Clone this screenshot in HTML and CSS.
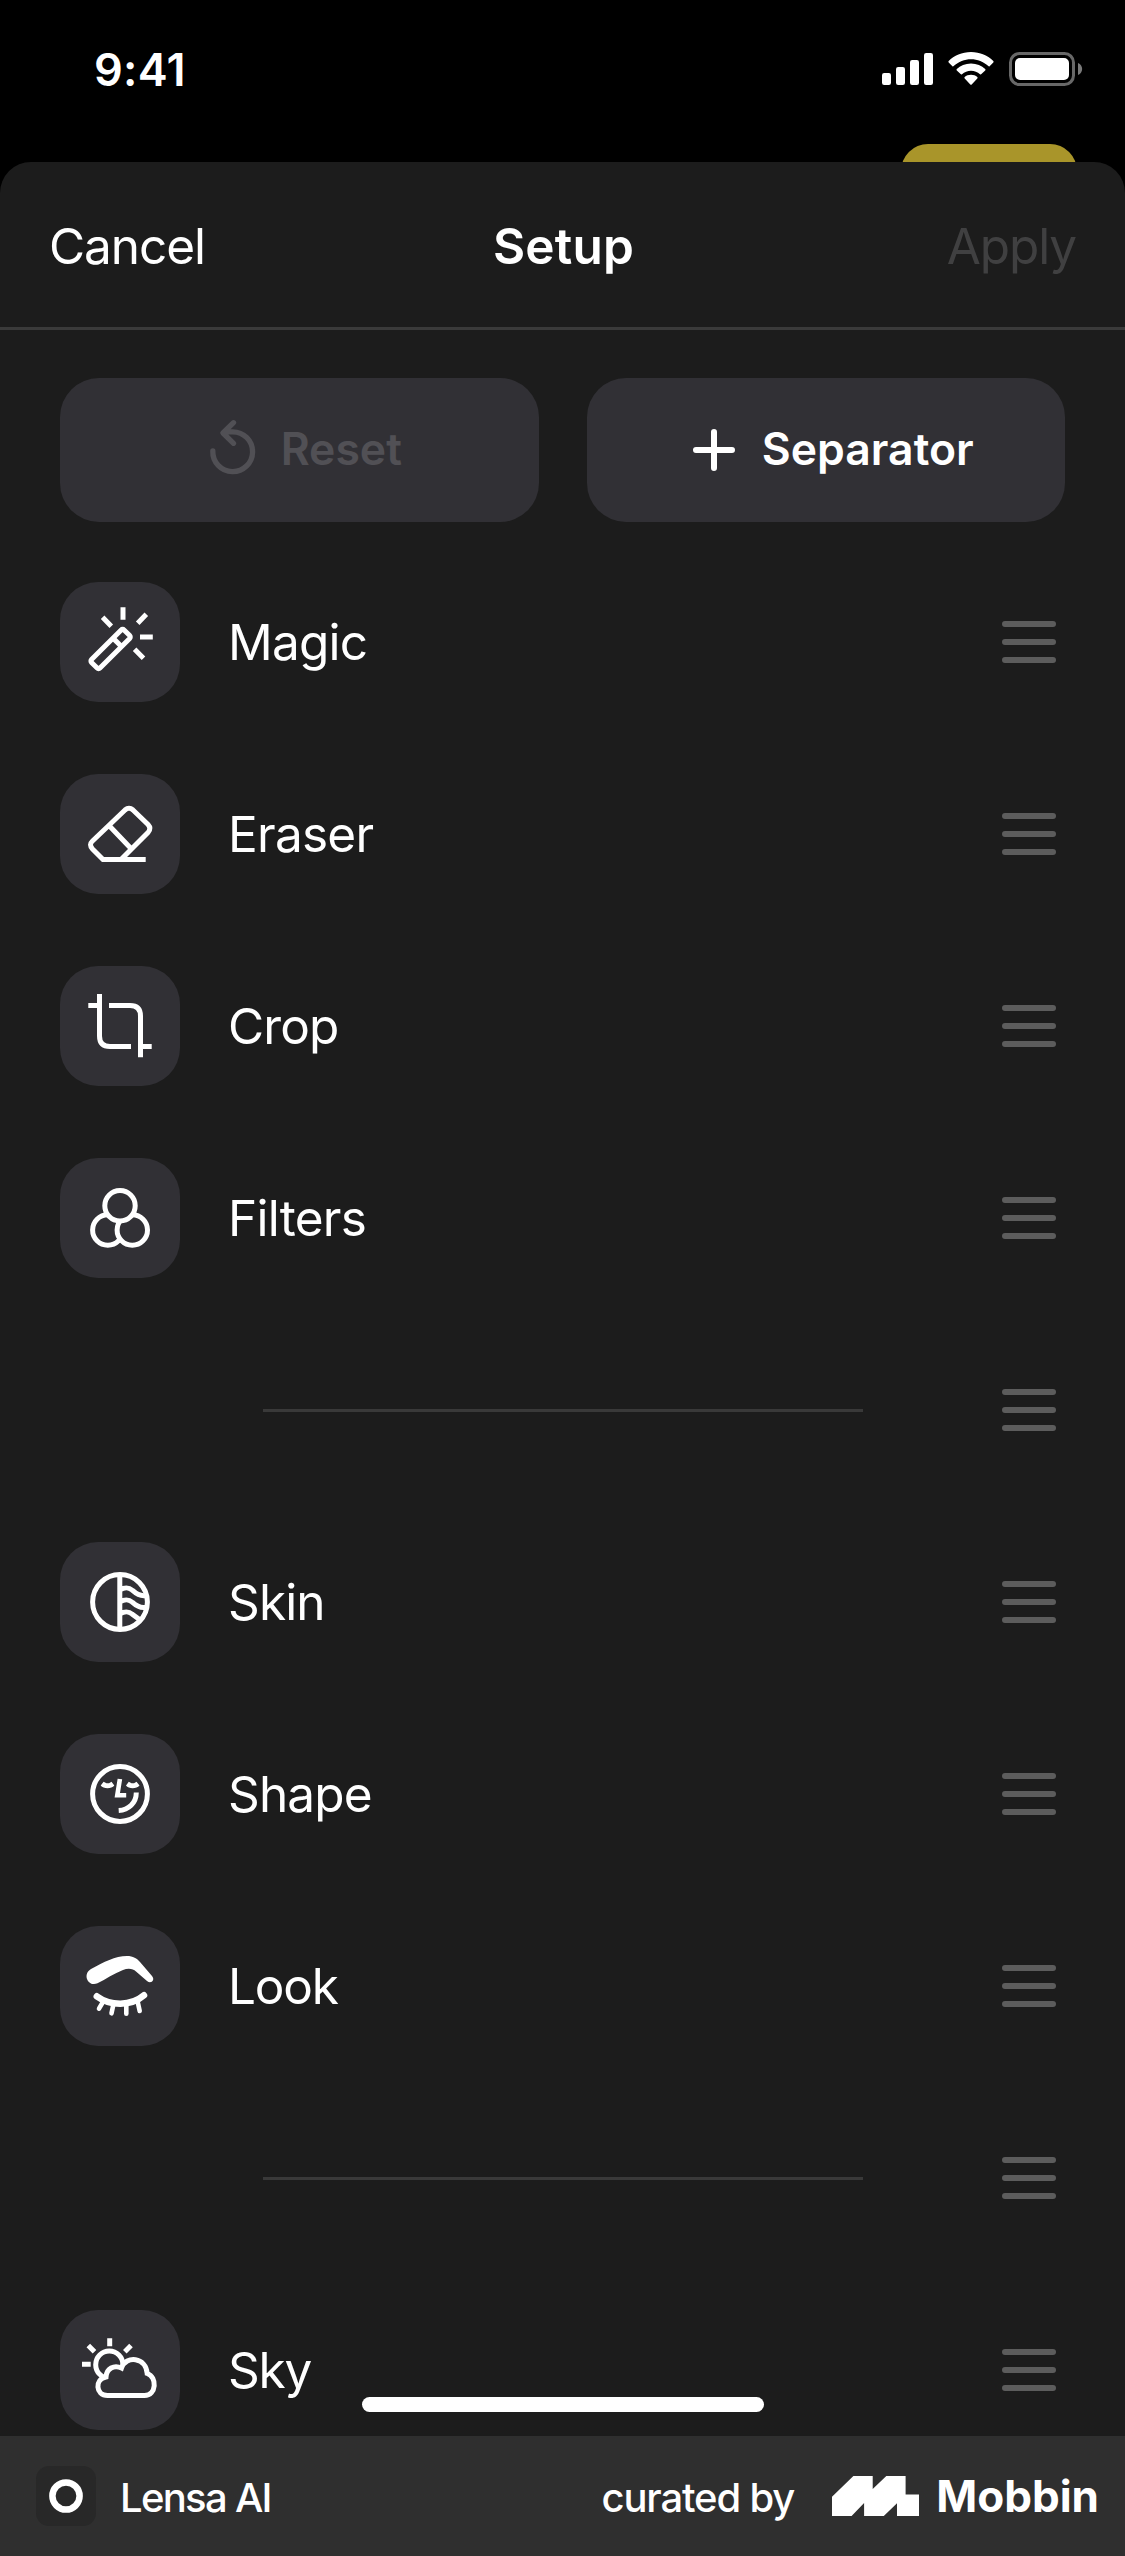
FILE: index.html
```
<!DOCTYPE html>
<html lang="en">
<head>
<meta charset="utf-8">
<title>Setup</title>
<link rel="stylesheet" href="styles.css">
</head>
<body>
<svg class="defs" aria-hidden="true">
  <symbol id="handle" viewBox="0 0 54 42">
    <path d="M3 3H51M3 21H51M3 39H51" stroke="#5c5c5c" stroke-width="6" stroke-linecap="round"/>
  </symbol>
</svg>

<main class="screen">
  <div class="status">
    <span class="time">9:41</span>
    <div class="status-icons">
      <svg width="51" height="32" viewBox="0 0 51 32" fill="#fff">
        <rect x="0" y="20" width="9" height="12" rx="2.2"/>
        <rect x="14" y="14" width="9" height="18" rx="2.2"/>
        <rect x="28" y="7" width="9" height="25" rx="2.2"/>
        <rect x="42" y="0" width="9" height="32" rx="2.2"/>
      </svg>
      <svg width="46" height="34" viewBox="0 0 46 34" fill="#fff">
        <path d="M23 0C32 0 40 3.5 45.300 9.100Q46 9.900 45.300 10.600L41.600 14.200Q41 14.800 40.300 14.100C35.500 9.700 29.500 7.300 23 7.300S10.500 9.700 5.700 14.100Q5 14.800 4.400 14.200L.7 10.600Q0 9.900.7 9.100C6 3.500 14 0 23 0Z"/>
        <path d="M23 11.400C28.700 11.400 33.700 13.500 37.200 17Q37.900 17.700 37.200 18.400L33.400 22.100Q32.700 22.800 32 22.200C29.500 20 26.500 18.700 23 18.700S16.500 20 14 22.200Q13.300 22.800 12.600 22.100L8.800 18.400Q8.100 17.700 8.800 17C12.300 13.500 17.300 11.400 23 11.400Z"/>
        <path d="M23 22.800C25.500 22.800 27.700 23.600 29.300 25Q30 25.700 29.300 26.400L23.700 32.400Q23 33.100 22.300 32.400L16.700 26.400Q16 25.700 16.700 25C18.300 23.600 20.500 22.800 23 22.800Z"/>
      </svg>
      <svg width="74" height="34" viewBox="0 0 74 34">
        <rect x="1.500" y="1.500" width="63" height="31" rx="9" fill="none" stroke="#686868" stroke-width="3"/>
        <rect x="6" y="6" width="54" height="22" rx="5" fill="#fff"/>
        <path d="M69 11C74.500 13 74.500 21 69 23Z" fill="#7a7a7a"/>
      </svg>
    </div>
    <div class="peek"></div>
  </div>

  <section class="sheet">
    <header class="bar">
      <span class="cancel">Cancel</span>
      <h1 class="title">Setup</h1>
      <span class="apply">Apply</span>
    </header>

    <div class="actions">
      <div class="button disabled">
        <svg width="72" height="72" viewBox="0 0 72 72" fill="none" stroke="currentColor" stroke-width="5.300" stroke-linecap="round" stroke-linejoin="round">
          <path d="M15.800 37A19.900 19.900 0 1 0 35.700 17.800H28M36.500 8.700L26 19L36.500 29.300"/>
        </svg>
        <span>Reset</span>
      </div>
      <div class="button">
        <svg width="72" height="72" viewBox="0 0 72 72" fill="none" stroke="currentColor" stroke-width="6" stroke-linecap="round">
          <path d="M36 18V54M18 36H54"/>
        </svg>
        <span>Separator</span>
      </div>
    </div>

    <ul class="tools">
      <li class="row">
        <svg class="tile" viewBox="0 0 120 120">
          <g transform="translate(50.600 67) rotate(-45)"><rect x="-23" y="-6" width="46" height="12" rx="2"/><path d="M9.400 -6V6"/></g>
          <path d="M63 25.300V37.700M86.300 32.300L77.700 41.200M80 55H92.800M74.600 67.300L83.500 76.300M42.600 35.300L51.300 44.200"/>
        </svg>
        <span class="label loose">Magic</span>
        <svg class="handle"><use href="#handle"/></svg>
      </li>
      <li class="row">
        <svg class="tile" viewBox="0 0 120 120">
          <path d="M85.700 85.500H43L32.500 75Q28.500 70.700 32.500 67L65 36Q69 32.500 73 36L88 50.500Q91.700 54.500 88 58.500L61 85.500M49 51.500L71 74.500"/>
        </svg>
        <span class="label loose">Eraser</span>
        <svg class="handle"><use href="#handle"/></svg>
      </li>
      <li class="row">
        <svg class="tile" viewBox="0 0 120 120">
          <path d="M28.300 39.500H39.500M39.500 28V70Q39.500 80.500 50 80.500H71M49 39.500H70Q80.500 39.500 80.500 50V91.300M80.500 80.500H91.700"/>
        </svg>
        <span class="label">Crop</span>
        <svg class="handle"><use href="#handle"/></svg>
      </li>
      <li class="row">
        <svg class="tile" viewBox="0 0 120 120">
          <g class="filled"><circle cx="47.800" cy="72" r="15.200"/><circle cx="72.300" cy="72" r="15.200"/><circle cx="60" cy="47.700" r="15.200"/></g>
        </svg>
        <span class="label loose">Filters</span>
        <svg class="handle"><use href="#handle"/></svg>
      </li>
      <li class="row divider">
        <hr>
        <svg class="handle"><use href="#handle"/></svg>
      </li>
      <li class="row">
        <svg class="tile" viewBox="0 0 120 120">
          <circle cx="60" cy="60" r="27.400"/>
          <path d="M59.800 33V87M60 48C64 45.300 69 45.300 72 48S79 54.800 86 53.500M60 60C64 57.300 69 57.300 72 60S79 66.800 86 65.300M60 72C64 69.300 69 69.300 72 72L79.500 77.500"/>
        </svg>
        <span class="label">Skin</span>
        <svg class="handle"><use href="#handle"/></svg>
      </li>
      <li class="row">
        <svg class="tile" viewBox="0 0 120 120">
          <circle cx="60" cy="60" r="27.400"/>
          <path d="M59.900 45L57.300 61.300H66.200" stroke-width="4.600"/>
          <path d="M76.300 58.500C76.300 69 68.500 76 58.700 76.600"/>
          <path class="solid" d="M40.700 51.500L43.600 47.800L46.500 49.200H49L51.500 47.800L54.300 51.500C51.500 55.200 43.500 55.200 40.700 51.500ZM66 51.500L68.800 47.800L71.500 49.200H74L76.500 47.800L79.500 51.500C76.500 55.200 68.800 55.200 66 51.500Z"/>
        </svg>
        <span class="label">Shape</span>
        <svg class="handle"><use href="#handle"/></svg>
      </li>
      <li class="row">
        <svg class="tile" viewBox="0 0 120 120">
          <path class="solid" d="M31 43C44 36 55 30 67 30C73 30 77 32.500 80 36L92 50C95.500 54 91 58.500 87 55L76 45.500C73 42.500 68 42 63 44C54 47.500 46 53 37.500 57.300C28 61.500 22 48 31 43Z"/>
          <path class="round" stroke-width="6.500" d="M36.800 70.300C50 80 71 80.500 84 69.300"/>
          <path class="round" stroke-width="4.600" d="M43.500 75L39 82.700M53.500 78L51.500 87.300M66.300 78V87.800M77.500 75L79.700 85"/>
        </svg>
        <span class="label tight">Look</span>
        <svg class="handle"><use href="#handle"/></svg>
      </li>
      <li class="row divider">
        <hr>
        <svg class="handle"><use href="#handle"/></svg>
      </li>
      <li class="row">
        <svg class="tile" viewBox="0 0 120 120">
          <circle cx="49.300" cy="54.700" r="13.600"/>
          <path d="M49.700 28.300V36.300M22 54.300H30.700M28.300 35.500L34.500 41.800M71 35.500L64.800 41.800"/>
          <path class="filled" d="M47.500 85.500C35.500 85.500 34.500 69 46 67C46.500 58.500 54 54.500 61.500 58C66 45 86 47 87.200 63.500C97.500 67 96.500 85.500 84.500 85.500Z"/>
        </svg>
        <span class="label tight">Sky</span>
        <svg class="handle"><use href="#handle"/></svg>
      </li>
    </ul>
  </section>
  <div class="home-indicator"></div>
</main>

<footer class="credit">
  <svg class="app-icon" width="60" height="60" viewBox="0 0 60 60">
    <rect width="60" height="60" rx="13" fill="#282828"/>
    <circle cx="30" cy="30" r="13.600" fill="none" stroke="#fff" stroke-width="6.500"/>
  </svg>
  <span class="app-name">Lensa AI</span>
  <span class="curated">curated by</span>
  <svg width="87" height="40" viewBox="0 0 87 40" fill="#fff">
    <path d="M0 20.700L21.400 0H40.700V13L54.300 0H73.600V18.500H87V40H65V27.300L51.800 40H32.100V27L19.600 40H0Z"/>
  </svg>
  <span class="brand">Mobbin</span>
</footer>
</body>
</html>
```
FILE: styles.css
```
* {
  box-sizing: border-box;
}

body {
  margin: 0;
  width: 1125px;
  background: #000;
  color: #fff;
  font-family: Inter, "Liberation Sans", sans-serif;
}

svg {
  display: block;
  flex: none;
}

.defs {
  position: absolute;
  width: 0;
  height: 0;
}

.screen {
  position: relative;
  height: 2436px;
  overflow: hidden;
}

/* status bar */
.status {
  position: relative;
  display: flex;
  align-items: center;
  justify-content: space-between;
  height: 162px;
  padding: 0 42px 24px 94px;
}

.time {
  font-size: 45px;
  font-weight: 600;
  letter-spacing: 0.3px;
}

.status-icons {
  display: flex;
  align-items: center;
  gap: 15px;
}

/* button of the screen underneath, showing above the sheet */
.peek {
  position: absolute;
  right: 48px;
  bottom: -42px;
  width: 176px;
  height: 60px;
  border-radius: 27px;
  background: #a9952a;
}

/* sheet */
.sheet {
  position: relative;
  min-height: 2274px;
  border-radius: 31px 31px 0 0;
  background: #1c1c1c;
}

.bar {
  display: grid;
  grid-template-columns: 1fr auto 1fr;
  align-items: center;
  height: 168px;
  padding: 3px 49px 0 49px;
  border-bottom: 3px solid #3a3a3a;
  font-size: 49.5px;
}

.cancel {
  letter-spacing: -1.05px;
}

.title {
  margin: 0;
  padding-left: 2px;
  font-size: inherit;
  font-weight: 600;
  letter-spacing: 0.2px;
}

.apply {
  justify-self: end;
  color: #404041;
  letter-spacing: -1.1px;
}

.actions {
  display: grid;
  grid-template-columns: 1fr 1fr;
  gap: 48px;
  padding: 48px 60px 24px;
}

.button {
  display: flex;
  align-items: center;
  justify-content: center;
  gap: 12px;
  height: 144px;
  border-radius: 39px;
  background: #313035;
  font-size: 44.5px;
  font-weight: 600;
}

.button span {
  padding-bottom: 2px;
}

.disabled {
  color: #515055;
}

/* tool list */
.tools {
  margin: 0;
  padding: 0;
  list-style: none;
}

.row {
  display: flex;
  align-items: center;
  height: 192px;
  padding: 0 69px 0 60px;
}

.tile {
  width: 120px;
  height: 120px;
  border-radius: 38px;
  background: #313035;
  fill: none;
  stroke: #fff;
  stroke-width: 5;
}

.tile .filled {
  fill: #313035;
}

.tile .solid {
  fill: #fff;
  stroke: none;
}

.tile .round {
  stroke-linecap: round;
}

.label {
  flex: 1;
  margin-left: 48px;
  font-size: 49.5px;
  letter-spacing: -0.85px;
}

.loose {
  letter-spacing: -0.75px;
}

.tight {
  letter-spacing: -1.2px;
}

.handle {
  width: 54px;
  height: 42px;
}

.divider {
  justify-content: space-between;
  padding-left: 263px;
}

.divider hr {
  width: 600px;
  height: 3px;
  margin: 0;
  border: 0;
  background: #393939;
}

.home-indicator {
  position: absolute;
  left: 362px;
  bottom: 24px;
  width: 402px;
  height: 15px;
  border-radius: 8px;
  background: #fff;
}

/* credit strip */
.credit {
  display: flex;
  align-items: center;
  height: 120px;
  padding: 0 26px 0 36px;
  background: #2f2f2f;
  font-size: 40px;
  font-weight: 500;
}

.app-name {
  margin-left: 24px;
  padding-top: 3px;
  letter-spacing: -1.7px;
}

.curated {
  margin: 0 38px 0 auto;
  padding-top: 3px;
  letter-spacing: -1.15px;
}

.brand {
  margin-left: 17px;
  font-size: 44px;
  font-weight: 700;
}
```
